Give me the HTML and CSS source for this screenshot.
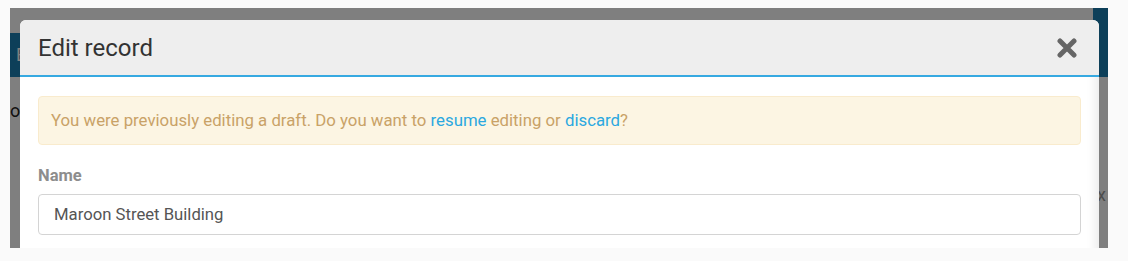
FILE: index.html
```html
<!DOCTYPE html>
<html lang="en">

<head>
    <meta charset="UTF-8">
    <meta name="viewport" content="width=device-width, initial-scale=1.0">
    <title>Edit record</title>
    <link rel="stylesheet" href="styles.css">
</head>

<body>
    <div class="frame">
        <div class="page-under">
            <div class="topbar">Bu</div>
            <div class="side-right"></div>
            <div class="under-text">o</div>
            <div class="under-x">x</div>
        </div>
        <div class="backdrop"></div>

        <div class="modal">
            <div class="modal-header">
                <h2 class="modal-title">Edit record</h2>
                <button class="close-btn" aria-label="Close">
                    <svg width="22" height="20" viewBox="0 0 22 20">
                        <path d="M4 3 L18 17 M18 3 L4 17" stroke="#666" stroke-width="5" stroke-linecap="round" />
                    </svg>
                </button>
            </div>
            <div class="modal-body">
                <div class="draft-alert">
                    You were previously editing a draft. Do you want to <a href="#">resume</a> editing or <a href="#">discard</a>?
                </div>
                <label class="field-label" for="name">Name</label>
                <input type="text" id="name" class="field-input" value="Maroon Street Building">
            </div>
        </div>
    </div>
</body>

</html>
```

FILE: styles.css
```css
body {
    margin: 0;
    padding: 8px 0 0 10px;
    background-color: #fafafa;
    font-family: Roboto, "Liberation Sans", sans-serif;
}

.frame {
    position: relative;
    width: 1098px;
    height: 240px;
    overflow: hidden;
    background-color: #fff;
}

.page-under {
    height: 100%;
}

.topbar {
    position: absolute;
    left: 0;
    top: 25px;
    width: 100%;
    height: 44px;
    background-color: #1b7fb3;
    color: #fff;
    font-size: 18px;
    line-height: 44px;
    padding-left: 6px;
}

.side-right {
    position: absolute;
    right: 0;
    top: 0;
    width: 15px;
    height: 69px;
    background-color: #1b7fb3;
}

.under-text {
    position: absolute;
    left: 0;
    top: 92px;
    font-size: 18px;
    color: #222;
}

.under-x {
    position: absolute;
    right: 2px;
    top: 176px;
    font-size: 18px;
    color: #999;
}

.backdrop {
    position: absolute;
    inset: 0;
    background-color: rgba(0, 0, 0, 0.5);
}

.modal {
    position: absolute;
    left: 10px;
    top: 12px;
    width: 1079px;
    height: 240px;
    background-color: #fff;
    border-radius: 6px 6px 0 0;
    overflow: hidden;
}

.modal-header {
    display: flex;
    align-items: center;
    justify-content: space-between;
    height: 55px;
    padding: 0 21px 0 18px;
    background-color: #eeeeee;
    border-bottom: 2px solid #36a9e1;
}

.modal-title {
    margin: 0;
    font-size: 24px;
    font-weight: 400;
    color: #333;
}

.close-btn {
    display: flex;
    padding: 0;
    margin-top: 0;
    border: none;
    background: none;
    cursor: pointer;
}

.modal-body {
    padding: 19px 18px 0 18px;
    height: 100%;
    box-shadow: inset -12px 0 10px -8px rgba(0, 0, 0, 0.08);
}

.draft-alert {
    padding: 13px 12px;
    background-color: #fcf5e3;
    border: 1px solid #f9ebcd;
    border-radius: 4px;
    color: #c9a267;
    font-size: 16.8px;
    line-height: 21px;
}

.draft-alert a {
    color: #2ba8e0;
    text-decoration: none;
}

.field-label {
    display: block;
    margin-top: 21px;
    margin-bottom: 9px;
    font-size: 16.5px;
    font-weight: 700;
    color: #8d8d8d;
}

.field-input {
    box-sizing: border-box;
    width: 100%;
    height: 41px;
    padding: 0 15px;
    border: 1px solid #d4d4d4;
    border-radius: 4px;
    font-family: Roboto, "Liberation Sans", sans-serif;
    font-size: 16.7px;
    color: #555;
}
```
